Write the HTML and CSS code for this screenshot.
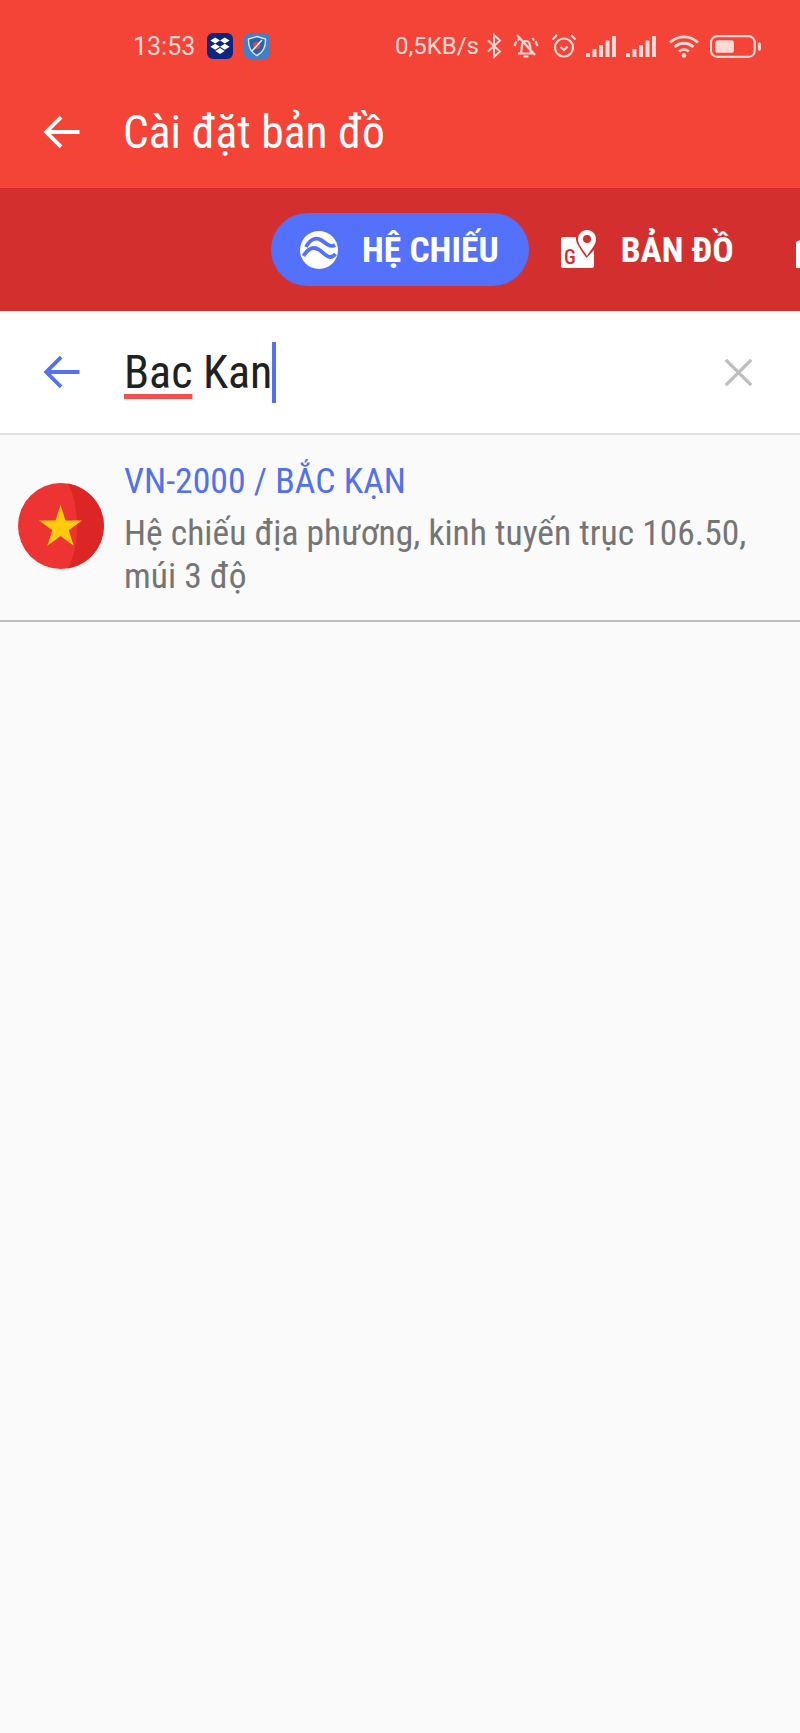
FILE: index.html
```html
<!DOCTYPE html>
<html lang="en">
<head>
    <meta charset="UTF-8">
    <meta name="viewport" content="width=device-width, initial-scale=1.0">
    <title>Cài đặt bản đồ</title>
    <link rel="stylesheet" href="styles.css">
</head>
<body>
    <div class="screen">
        <header class="app-header">
            <div class="status-bar">
                <div class="status-left">
                    <span class="clock">13:53</span>
                    <svg class="notif-icon" viewBox="0 0 26 26"><rect width="26" height="26" rx="6" fill="#0d2481"/><path d="M8.200 4.500 13 7.600l-4.800 3L3.400 7.600zM17.800 4.500 22.600 7.600l-4.800 3L13 7.600zM8.200 10.700 13 13.800l-4.800 3-4.800-3zM17.800 10.700l4.800 3.100-4.800 3-4.800-3zM8.300 18l4.700-3 4.700 3-4.700 3.100z" fill="#fff"/></svg>
                    <svg class="notif-icon" viewBox="0 0 26 26"><rect width="26" height="26" rx="6" fill="#3f80c8"/><path d="M13 3.500 21.500 6c.3 7-1.500 13-8.500 16.500C6 19 4.200 13 4.500 6z" fill="#2d62a8" stroke="#d8e8f6" stroke-width="1.400"/><circle cx="12.500" cy="12.500" r="3.500" fill="#c9514f"/><path d="M18 7 8 18" stroke="#e8f0f8" stroke-width="1.500"/></svg>
                </div>
                <div class="status-right">
                    <span class="net-speed">0,5KB/s</span>
                    <svg class="st-icon st-bt" viewBox="0 0 16 26"><path d="M2 7.500 14 18.500 8 24V2l6 5.500L2 18.500" fill="none" stroke="currentColor" stroke-width="2"/></svg>
                    <svg class="st-icon st-bell" viewBox="0 0 26 26"><path d="M5 20.500h16M7.500 20.500c1.500-2 1-5 1.500-8 .5-3 2-4.500 4-4.500s3.500 1.500 4 4.500c.5 3 0 6 1.500 8M10.500 23.500h5M4 2 22 22M3.500 8 1.500 13M22.500 8l2 5M6.500 5 5 7.500M19.500 5 21 7.500" fill="none" stroke="currentColor" stroke-width="2.200"/></svg>
                    <svg class="st-icon st-alarm" viewBox="0 0 26 26"><circle cx="13" cy="14.500" r="9" fill="none" stroke="currentColor" stroke-width="2.200"/><path d="M9.500 14l3.500 3 3.500-3.500M1.500 6.500 6 2M24.500 6.500 20 2" fill="none" stroke="currentColor" stroke-width="2.200"/></svg>
                    <svg class="st-icon st-signal" viewBox="0 0 30 22"><path d="M0 18h4v4H0zM6.500 14h4v8h-4zM13 10h4v12h-4zM19.500 5.500h4V22h-4zM26 1h4v21h-4z" fill="currentColor"/></svg>
                    <svg class="st-icon st-signal" viewBox="0 0 30 22"><path d="M0 18h4v4H0zM6.500 14h4v8h-4zM13 10h4v12h-4zM19.500 5.500h4V22h-4zM26 1h4v21h-4z" fill="currentColor"/></svg>
                    <svg class="st-icon st-wifi" viewBox="0 0 32 24"><path d="M2 8.500c8-7.500 20-7.500 28 0M6.500 13c5.500-5 13.500-5 19 0M11 17.500c3-2.500 7-2.500 10 0" fill="none" stroke="currentColor" stroke-width="2.800"/><circle cx="16" cy="21.500" r="2.300" fill="currentColor"/></svg>
                    <svg class="st-icon st-battery" viewBox="0 0 50 22"><rect x="1" y="1" width="42" height="20" rx="6" fill="none" stroke="currentColor" stroke-width="2"/><rect x="5" y="5" width="18" height="12" rx="2.500" fill="currentColor"/><rect x="46" y="7" width="3" height="8" rx="1.500" fill="currentColor"/></svg>
                </div>
            </div>
            <div class="title-bar">
                <svg class="back-icon" viewBox="0 0 24 24"><path d="M22 12H3M11.500 3.500 3 12l8.500 8.500" fill="none" stroke="currentColor" stroke-width="2.200"/></svg>
                <h1>Cài đặt bản đồ</h1>
            </div>
        </header>

        <nav class="tab-bar">
            <div class="tab active">
                <svg class="tab-icon" viewBox="0 0 38 38"><circle cx="19" cy="19" r="19" fill="#fff"/><path d="M6 16C10 8 16 6 21 9s9 8 14 5M3.500 25C8 17 14 15 19.500 19s10 11 16 4" fill="none" stroke="#5371fb" stroke-width="3.800"/></svg>
                <span>HỆ CHIẾU</span>
            </div>
            <div class="tab">
                <svg class="tab-icon" viewBox="0 0 36 40"><path d="M3 7h13c-.5 5 2 9 10.500 21L34 20v16a2 2 0 0 1-2 2H3a2 2 0 0 1-2-2V9a2 2 0 0 1 2-2z" fill="#fff"/><path d="M27 0c-5 0-9 4-9 9 0 6 5 10 9 17 4-7 9-11 9-17 0-5-4-9-9-9z" fill="#fff"/><circle cx="27" cy="9" r="4" fill="#d32f2f"/><text class="map-g" x="4" y="34">G</text></svg>
                <span>BẢN ĐỒ</span>
            </div>
            <div class="tab">
                <svg class="tab-icon" viewBox="0 0 36 40"><path d="M0 12 12 6v32H0z" fill="#fff"/></svg>
            </div>
        </nav>

        <div class="search-box">
            <svg class="search-back" viewBox="0 0 24 24"><path d="M22 12H3M11.500 3.500 3 12l8.500 8.500" fill="none" stroke="currentColor" stroke-width="2.200"/></svg>
            <div class="search-text"><span class="misspelled">Bac</span> Kan<span class="caret"></span></div>
            <svg class="search-clear" viewBox="0 0 24 24"><path d="M1.500 1.500l21 21M22.500 1.500l-21 21" fill="none" stroke="currentColor" stroke-width="2.600"/></svg>
        </div>

        <div class="result-row">
            <svg class="flag" viewBox="0 0 86 86"><circle cx="43" cy="43" r="43" fill="#ee3333"/><path d="M50 .600a43 43 0 0 1 0 84.800c6-11 9-26 9-42S56 12 50 .600z" fill="#dc2626"/><path d="M42.500 22l5 15.500H64L50.700 47.200l5 15.500-13.200-9.600-13.200 9.600 5-15.500L21 37.500h16.500z" fill="#ffcb0c"/></svg>
            <div class="result-text">
                <div class="result-title">VN-2000 / BẮC KẠN</div>
                <div class="result-desc">Hệ chiếu địa phương, kinh tuyến trục 106.50, múi 3 độ</div>
            </div>
        </div>
    </div>
</body>
</html>
```

FILE: styles.css
```css
* {
    box-sizing: border-box;
}
html, body {
    margin: 0;
    padding: 0;
}
body {
    font-family: Roboto, sans-serif;
    background-color: #fafafa;
    color: #212121;
}
.screen {
    width: 800px;
    height: 1733px;
    overflow: hidden;
    background-color: #fafafa;
}
.app-header {
    height: 188px;
    background-color: #f44438;
    color: #fff;
}
.status-bar {
    height: 92px;
    padding: 0 38px 0 133px;
    display: flex;
    justify-content: space-between;
    align-items: center;
    color: #fcd9d5;
}
.status-left {
    display: flex;
    align-items: center;
}
.clock {
    font-size: 25px;
    width: 74px;
}
.notif-icon {
    width: 26px;
    height: 26px;
    margin-right: 11px;
}
.status-right {
    display: flex;
    align-items: center;
}
.net-speed {
    font-size: 24px;
    margin-right: 7px;
}
.st-icon {
    display: block;
}
.st-bt {
    width: 16px;
    height: 26px;
    margin-right: 11px;
}
.st-bell {
    width: 26px;
    height: 26px;
    margin-right: 12px;
}
.st-alarm {
    width: 26px;
    height: 26px;
    margin-right: 9px;
}
.st-signal {
    width: 30px;
    height: 22px;
    margin-right: 10px;
}
.st-signal + .st-signal {
    margin-right: 12px;
}
.st-wifi {
    width: 32px;
    height: 24px;
    margin-right: 10px;
}
.st-battery {
    width: 52px;
    height: 23px;
}
.title-bar {
    height: 80px;
    padding-left: 41px;
    display: flex;
    align-items: center;
}
.back-icon {
    width: 42px;
    height: 42px;
    margin-right: 40px;
}
.title-bar h1 {
    margin: 0;
    font-size: 45.500px;
    font-weight: 400;
    font-stretch: condensed;
}
.tab-bar {
    height: 123px;
    padding-left: 271px;
    background-color: #d32f2f;
    display: flex;
    align-items: center;
    overflow: hidden;
}
.tab {
    height: 73px;
    padding: 0 31px 0 30px;
    display: flex;
    align-items: center;
    flex-shrink: 0;
    color: #fff;
    font-size: 35.500px;
    font-weight: 700;
    font-stretch: condensed;
}
.tab.active {
    padding: 0 30px 0 29px;
    border-radius: 37px;
    background-color: #5371fb;
}
.tab-icon {
    width: 38px;
    height: 40px;
    margin-right: 24px;
}
.map-g {
    font-size: 20px;
    font-weight: 500;
    fill: #d32f2f;
}
.search-box {
    height: 122px;
    padding: 0 47px 0 41px;
    background-color: #fff;
    display: flex;
    align-items: center;
}
.search-back {
    width: 42px;
    height: 42px;
    margin-right: 41px;
    color: #5371e8;
}
.search-text {
    flex: 1;
    font-size: 46px;
    font-stretch: condensed;
    display: flex;
    align-items: center;
    white-space: pre;
}
.misspelled {
    text-decoration: underline #ef5350 5px;
    text-underline-offset: 6px;
}
.caret {
    display: inline-block;
    width: 4px;
    height: 61px;
    background-color: #5371e8;
}
.search-clear {
    width: 29px;
    height: 29px;
    color: #bdbdbd;
}
.result-row {
    height: 189px;
    padding: 0 36px 0 18px;
    border-top: 2px solid #e0e0e0;
    border-bottom: 2px solid #bdbdbd;
    display: flex;
    align-items: center;
}
.flag {
    width: 86px;
    height: 86px;
    margin: 0 20px 3px 0;
    flex-shrink: 0;
}
.result-text {
    padding-top: 2px;
}
.result-title {
    font-size: 35.750px;
    line-height: 44px;
    margin-bottom: 9px;
    font-stretch: condensed;
    color: #5371e8;
}
.result-desc {
    font-size: 35.500px;
    line-height: 43px;
    font-stretch: condensed;
    color: #757575;
}
```
